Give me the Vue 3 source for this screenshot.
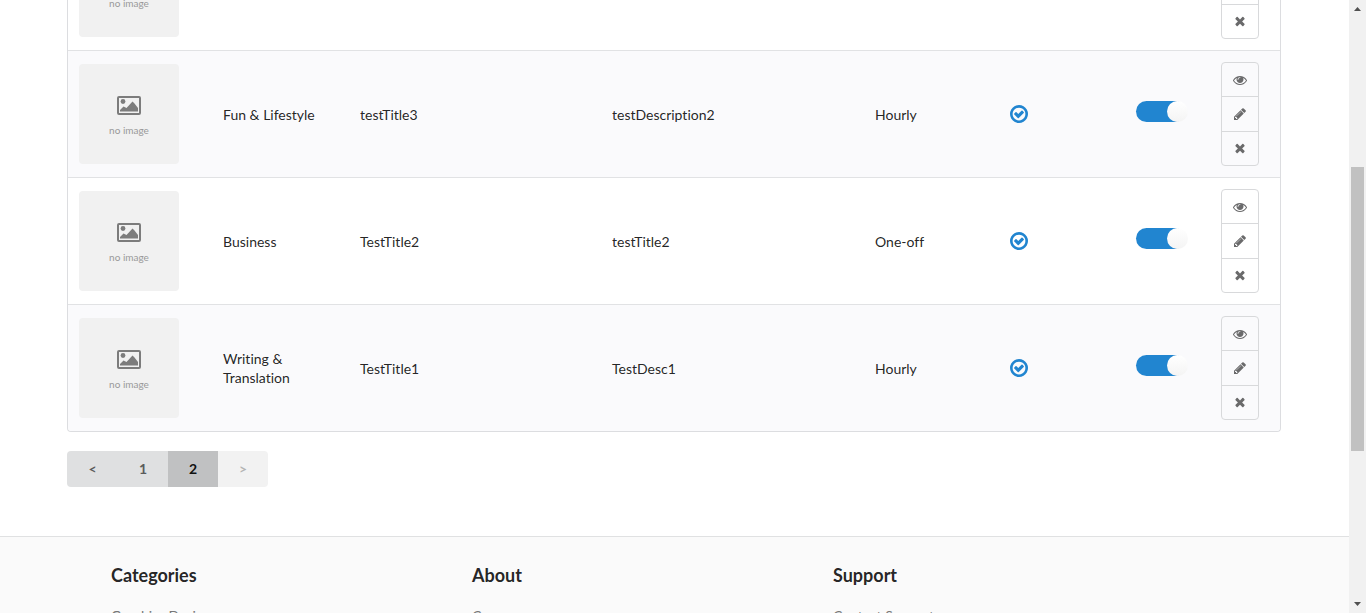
<script setup>
import { ref } from 'vue'

const rows = ref([
  { category: '', title: '', description: '', type: '', listed: false },
  { category: 'Fun & Lifestyle', title: 'testTitle3', description: 'testDescription2', type: 'Hourly', listed: true, active: true },
  { category: 'Business', title: 'TestTitle2', description: 'testTitle2', type: 'One-off', listed: true, active: true },
  { category: 'Writing & Translation', title: 'TestTitle1', description: 'TestDesc1', type: 'Hourly', listed: true, active: true },
])

const actions = [
  { name: 'View', path: 'M1664 960q-152-236-381-353 61 104 61 225 0 185-131.5 316.5t-316.5 131.5-316.5-131.5-131.5-316.5q0-121 61-225-229 117-381 353 133 205 333.5 326.5t434.5 121.5 434.5-121.5 333.5-326.5zm-720-384q0-20-14-34t-34-14q-125 0-214.5 89.5t-89.5 214.5q0 20 14 34t34 14 34-14 14-34q0-86 61-147t147-61q20 0 34-14t14-34zm848 384q0 34-20 69-140 230-376.5 368.5t-499.5 138.5-499.5-139-376.5-368q-20-35-20-69t20-69q140-229 376.5-368t499.5-139 499.5 139 376.5 368q20 35 20 69z' },
  { name: 'Edit', path: 'M491 1536l91-91-235-235-91 91v107h128v128h107zm523-928q0-22-22-22-10 0-17 7l-542 542q-7 7-7 17 0 22 22 22 10 0 17-7l542-542q7-7 7-17zm-54-192l416 416-832 832h-416v-416zm683 96q0 53-37 90l-166 166-416-416 166-165q36-38 90-38 53 0 91 38l235 234q37 39 37 91z' },
  { name: 'Remove', path: 'M1490 1322q0 40-28 68l-136 136q-28 28-68 28t-68-28l-294-294-294 294q-28 28-68 28t-68-28l-136-136q-28-28-28-68t28-68l294-294-294-294q-28-28-28-68t28-68l136-136q28-28 68-28t68 28l294 294 294-294q28-28 68-28t68 28l136 136q28 28 28 68t-28 68l-294 294 294 294q28 28 28 68z' },
]

const footer = [
  { heading: 'Categories', link: 'Graphics Design' },
  { heading: 'About', link: 'Careers' },
  { heading: 'Support', link: 'Contact Support' },
]
</script>

<template>
  <div class="window">
    <div class="page">
      <main class="content">
        <table class="listings">
          <colgroup>
            <col class="c-image" /><col class="c-category" /><col class="c-title" /><col />
            <col class="c-type" /><col class="c-listed" /><col class="c-active" /><col class="c-actions" />
          </colgroup>
          <tbody>
            <tr v-for="(row, i) in rows" :key="i">
              <td>
                <div class="thumb">
                  <svg class="picture" viewBox="0 0 24 19" aria-hidden="true">
                    <rect x="1" y="1" width="22" height="17" rx="1" fill="none" stroke="#7c7c7c" stroke-width="2" />
                    <circle cx="6" cy="5.5" r="2.4" fill="#7c7c7c" />
                    <path d="M3 15.5v-1.500l3.500-3.500 3 1.500 6-6.500 2 2 3.500 4.500v3.500z" fill="#7c7c7c" />
                  </svg>
                  <span>no image</span>
                </div>
              </td>
              <td>{{ row.category }}</td>
              <td>{{ row.title }}</td>
              <td>{{ row.description }}</td>
              <td>{{ row.type }}</td>
              <td>
                <svg v-if="row.listed" class="check" viewBox="128 128 1536 1536" aria-hidden="true">
                  <path d="M1299 813l-422 422q-19 19-45 19t-45-19l-294-294q-19-19-19-45t19-45l102-102q19-19 45-19t45 19l147 147 275-275q19-19 45-19t45 19l102 102q19 19 19 45t-19 45zm141 83q0-148-73-273t-198-198-273-73-273 73-198 198-73 273 73 273 198 198 273 73 273-73 198-198 73-273zm224 0q0 209-103 385.5t-279.5 279.5-385.5 103-385.5-103-279.5-279.5-103-385.5 103-385.5 279.5-279.5 385.5-103 385.5 103 279.5 279.5 103 385.5z" />
                </svg>
              </td>
              <td>
                <label v-if="row.listed" class="switch">
                  <input v-model="row.active" type="checkbox" :aria-label="row.title" />
                </label>
              </td>
              <td>
                <div class="actions">
                  <button v-for="a in actions" :key="a.name" type="button" :aria-label="a.name">
                    <svg viewBox="0 0 1792 1792" aria-hidden="true"><path :d="a.path" /></svg>
                  </button>
                </div>
              </td>
            </tr>
          </tbody>
        </table>
        <nav class="pager">
          <button type="button">&lt;</button>
          <button type="button">1</button>
          <button type="button" class="current" aria-current="page">2</button>
          <button type="button" disabled>&gt;</button>
        </nav>
      </main>
      <footer class="footer">
        <section v-for="f in footer" :key="f.heading">
          <h4>{{ f.heading }}</h4>
          <a href="#">{{ f.link }}</a>
        </section>
      </footer>
    </div>
    <div class="scrollbar" aria-hidden="true">
      <svg viewBox="0 0 17 17"><path d="M5 11h7L8.500 7z" /></svg>
      <div class="track"><div class="handle"></div></div>
      <svg viewBox="0 0 17 17"><path d="M5 6h7L8.500 10z" /></svg>
    </div>
  </div>
</template>

<style>
body {
  margin: 0;
  overflow: hidden;
}
</style>

<style scoped>
.window {
  display: flex;
  height: 100vh;
  overflow: hidden;
  background: #fff;
  color: rgba(0, 0, 0, 0.87);
  font-family: Lato, "Open Sans", sans-serif;
  font-size: 14px;
  font-variant-ligatures: none;
  line-height: 19px;
}
.page {
  flex: 1;
  min-width: 0;
  overflow: hidden;
}
/* the list is shown scrolled down, inside its first row */
.content {
  margin: -77px 68px 0 67px;
}
.listings {
  width: 100%;
  table-layout: fixed;
  border-collapse: separate;
  border-spacing: 0;
  border: 1px solid #dcdde0;
  border-top: 0;
  border-radius: 4px;
}
.c-image { width: 144px; }
.c-category { width: 137px; }
.c-title { width: 252px; }
.c-type { width: 135px; }
.c-listed { width: 126px; }
.c-active { width: 85px; }
.c-actions { width: 70px; }
td {
  padding: 11px;
  border-top: 1px solid #e1e2e4;
  vertical-align: middle;
}
tr:nth-child(even) td {
  background: #fafafc;
}
tr:last-child td:first-child { border-bottom-left-radius: 4px; }
tr:last-child td:last-child { border-bottom-right-radius: 4px; }
.thumb {
  display: flex;
  flex-direction: column;
  align-items: center;
  justify-content: center;
  gap: 8px;
  box-sizing: border-box;
  width: 100px;
  height: 100px;
  padding-top: 4px;
  border-radius: 4px;
  background: #f1f1f1;
  color: #999;
  font-size: 10px;
  line-height: 14px;
}
.picture {
  width: 24px;
  height: 19px;
}
.check {
  display: block;
  width: 18px;
  height: 18px;
  fill: #2185d0;
}
.switch {
  display: flex;
  padding-bottom: 5px;
}
.switch input {
  appearance: none;
  position: relative;
  width: 49px;
  height: 21px;
  margin: 0;
  border-radius: 11px;
  background: #d4d4d5;
}
.switch input:checked {
  background: #2185d0;
}
.switch input::before {
  content: "";
  position: absolute;
  left: 0;
  width: 21px;
  height: 21px;
  border-radius: 50%;
  background: linear-gradient(#fff, #f4f4f4);
}
.switch input:checked::before {
  left: 31px;
}
.actions {
  display: flex;
  flex-direction: column;
  box-sizing: border-box;
  width: 38px;
  height: 104px;
  border: 1px solid #d8d9db;
  border-radius: 4px;
}
.actions button {
  display: flex;
  flex: 1;
  align-items: center;
  justify-content: center;
  padding: 0;
  border: 0;
  background: none;
}
.actions button + button {
  border-top: 1px solid #d8d9db;
}
.actions svg {
  width: 14px;
  height: 14px;
  fill: #6a6a6b;
}
.pager {
  display: flex;
  margin-top: 19px;
}
.pager button {
  width: 50px;
  height: 36px;
  padding: 0 0 2px;
  border: 0;
  background: #dfe0e1;
  color: #5a5b5b;
  font: inherit;
  font-weight: 700;
}
.pager button:first-child { width: 51px; border-radius: 4px 0 0 4px; }
.pager button:last-child { border-radius: 0 4px 4px 0; }
.pager .current {
  background: #c0c1c2;
  color: #111;
}
.pager button:disabled {
  background: #f2f2f2;
  color: #b4b4b4;
}
.footer {
  display: grid;
  grid-template-columns: repeat(3, 361px);
  margin-top: 49px;
  padding: 27px 111px;
  border-top: 1px solid #e0e1e2;
  background: #fafafa;
}
.footer h4 {
  margin: 0 0 20px;
  font-size: 18px;
  line-height: 22px;
}
.footer a {
  display: block;
  color: #777;
  text-decoration: none;
}
.scrollbar {
  display: flex;
  flex-direction: column;
  width: 17px;
  background: #f1f1f1;
}
.scrollbar svg {
  width: 17px;
  height: 17px;
  fill: #505050;
}
.track {
  display: flex;
  flex: 1;
  flex-direction: column;
}
.track::before {
  content: "";
  flex: 150;
}
.track::after {
  content: "";
  flex: 145;
}
.handle {
  flex: 284;
  margin: 0 2px;
  background: #c1c1c1;
}
</style>
